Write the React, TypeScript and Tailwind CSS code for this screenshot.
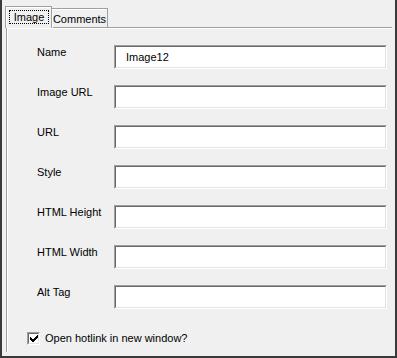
import React from 'react';

const fields = [
  { label: 'Name', value: 'Image12' },
  { label: 'Image URL', value: '' },
  { label: 'URL', value: '' },
  { label: 'Style', value: '' },
  { label: 'HTML Height', value: '' },
  { label: 'HTML Width', value: '' },
  { label: 'Alt Tag', value: '' },
];

function SunkenField({ value }: { value: string }) {
  return (
    <div className="w-[273px] h-[24px] border border-t-[#a0a0a0] border-l-[#a0a0a0] border-r-white border-b-white">
      <div className="h-full bg-white border border-t-[#696969] border-l-[#696969] border-r-[#e3e3e3] border-b-[#e3e3e3] flex items-center pl-[10px] text-black">
        {value}
      </div>
    </div>
  );
}

export default function App() {
  return (
    <div
      className="w-[397px] h-[358px] bg-[#f0f0f0] border-x-2 border-b-2 border-[#3a3a3a] flex flex-col pl-[4px] pr-[3px] pb-[4px] pt-[7px] text-[11px] leading-[13px] text-black"
      style={{ fontFamily: '"Liberation Sans", Arial, sans-serif' }}
    >
      <div className="flex items-end h-[21px] relative z-10 -mb-[1px]">
        <div className="-ml-[1px] w-[47px] h-[22px] bg-[#f0f0f0] border-t border-l border-r border-t-[#a0a0a0] border-l-[#a0a0a0] border-r-[#a0a0a0] shadow-[inset_1px_1px_0_#ffffff] flex items-start pt-[3px] pl-[3px]">
          <div className="w-[40px] h-[14px] border border-dotted border-black flex items-center justify-center">
            Image
          </div>
        </div>
        <div className="w-[56px] h-[20px] border-t border-r border-[#a0a0a0] shadow-[inset_1px_1px_0_#ffffff] flex items-center justify-center pt-[1px]">
          Comments
        </div>
      </div>
      <div className="flex-1 border-t border-l border-[#a0a0a0] shadow-[inset_1px_1px_0_#ffffff] flex flex-col pt-[17px] pl-[30px]">
        <div className="flex flex-col gap-[16px]">
          {fields.map((f) => (
            <div key={f.label} className="flex items-start">
              <span className="w-[77px] pt-[1px]">{f.label}</span>
              <SunkenField value={f.value} />
            </div>
          ))}
        </div>
        <label className="flex items-center gap-[5px] mt-[23px] -ml-[10px]">
          <span className="w-[13px] h-[13px] bg-white border border-t-[#a0a0a0] border-l-[#a0a0a0] border-r-white border-b-white flex">
            <span className="flex-1 border border-t-[#696969] border-l-[#696969] border-r-[#e3e3e3] border-b-[#e3e3e3] flex items-center justify-center">
              <svg width="8" height="7" viewBox="0 0 8 7" shapeRendering="crispEdges">
                <path d="M0 2 L0 5 L2 7 L3 7 L8 2 L8 -1 L2.5 4.5 Z" fill="#000" />
              </svg>
            </span>
          </span>
          <span>Open hotlink in new window?</span>
        </label>
      </div>
    </div>
  );
}
